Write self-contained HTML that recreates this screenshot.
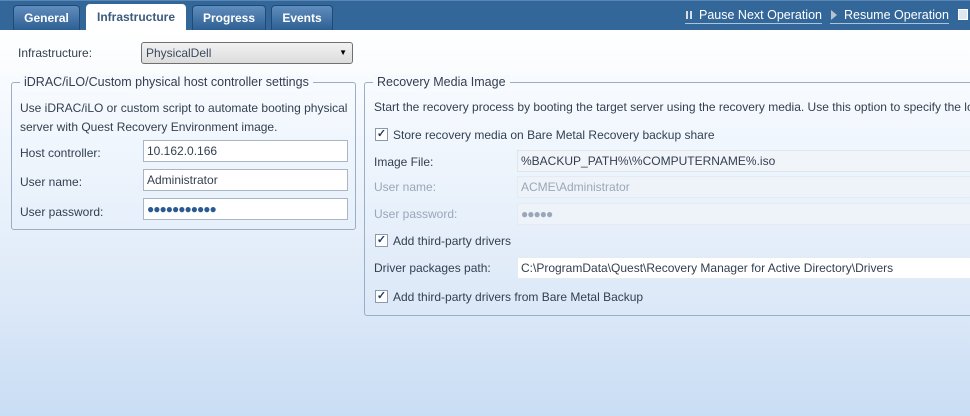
<!DOCTYPE html>
<html><head><style>
*{box-sizing:border-box;margin:0;padding:0}
body{width:970px;height:416px;overflow:hidden;font-family:"Liberation Sans",sans-serif;font-size:12px;color:#333f4f;position:relative;background:linear-gradient(#ffffff 30px,#f3f8fe 120px,#dde9f8 300px,#c9ddf4 416px)}
.hdr{position:absolute;left:0;top:0;width:970px;height:30px;background:#336699;border-top:1px solid #5a86b5}
.tab{position:absolute;top:5px;height:25px;background:linear-gradient(#5f8dbd,#2e5f93);border:1px solid #1f4a78;border-bottom:none;border-radius:4px 4px 0 0;color:#fff;font-weight:bold;text-align:center;line-height:24px;font-size:12px}
.tab.act{background:#fff;color:#3b5a80;top:4px;height:27px;border-color:#fff}
.a{position:absolute;white-space:nowrap}
.lnk{color:#fff;font-size:12.5px;border-bottom:1px solid #aac3de;line-height:15px}
.box{position:absolute;border:1px solid #9aaec6;border-radius:3px}
.leg{position:absolute;top:-8px;padding:0 4px;background:#f6f9fe;color:#333f4f;font-size:12.5px}
.in{position:absolute;height:22px;border:1px solid #a9b6c6;background:#fff;padding-left:3px;line-height:20px;color:#333f4f;font-size:12px}
.cb{position:absolute;width:13px;height:13px;border:1px solid #8a99ab;background:#fff;font-size:11px;line-height:11px;text-align:center;color:#223a66;font-weight:bold}
.g{color:#9aa7b8}
.ic{display:inline-block;vertical-align:-1px;margin-right:6px}
</style></head><body>
<div class="hdr"></div>
<div class="tab" style="left:13px;width:67px">General</div>
<div class="tab act" style="left:86px;width:100px">Infrastructure</div>
<div class="tab" style="left:192px;width:74px">Progress</div>
<div class="tab" style="left:271px;width:62px">Events</div>
<div class="a lnk" style="left:685px;top:8px"><svg class="ic" width="8" height="10"><rect x="1" y="1" width="2" height="8" fill="#d8dde4"/><rect x="5" y="1" width="2" height="8" fill="#d8dde4"/></svg>Pause Next Operation</div>
<div class="a lnk" style="left:830px;top:8px"><svg class="ic" width="8" height="10"><path d="M1 0L7 5L1 10Z" fill="#b8c2ce"/></svg>Resume Operation</div>
<div class="a" style="left:958px;top:9px;width:10px;height:11px;background:#dfe7f0;border:1px solid #fff"></div>

<div class="a" style="left:18px;top:46px">Infrastructure:</div>
<div class="a" style="left:141px;top:42px;width:212px;height:22px;border:1px solid #707070;border-radius:3px;background:linear-gradient(#f2f2f2,#dcdcdc);padding-left:4px;line-height:20px;color:#3a4a60">PhysicalDell<span style="position:absolute;right:5px;font-size:8px;color:#000">▼</span></div>

<div class="box" style="left:11px;top:82px;width:345px;height:148px">
<div class="leg" style="left:8px">iDRAC/iLO/Custom physical host controller settings</div>
</div>
<div class="a" style="left:20px;top:99px;line-height:19px">Use iDRAC/iLO or custom script to automate booting physical<br>server with Quest Recovery Environment image.</div>
<div class="a" style="left:20px;top:146px">Host controller:</div>
<div class="in" style="left:143px;top:140px;width:205px">10.162.0.166</div>
<div class="a" style="left:20px;top:175px">User name:</div>
<div class="in" style="left:143px;top:169px;width:205px">Administrator</div>
<div class="a" style="left:20px;top:205px">User password:</div>
<div class="in" style="left:143px;top:198px;width:205px;color:#2b5a92;letter-spacing:-1px">●●●●●●●●●●●</div>

<div class="box" style="left:364px;top:82px;width:620px;height:234px">
<div class="leg" style="left:8px">Recovery Media Image</div>
</div>
<div class="a" style="left:374px;top:100px">Start the recovery process by booting the target server using the recovery media. Use this option to specify the lo</div>
<div class="cb" style="left:375px;top:128px">✓</div>
<div class="a" style="left:393px;top:128px">Store recovery media on Bare Metal Recovery backup share</div>
<div class="a" style="left:374px;top:155px">Image File:</div>
<div class="in" style="left:517px;top:150px;width:460px;background:#f1f5fa;border-color:#dde5ee">%BACKUP_PATH%\%COMPUTERNAME%.iso</div>
<div class="a g" style="left:374px;top:180px">User name:</div>
<div class="in g" style="left:517px;top:176px;width:460px;background:#eef3f9;border-color:#e4ebf3">ACME\Administrator</div>
<div class="a g" style="left:374px;top:207px">User password:</div>
<div class="in g" style="left:517px;top:203px;width:460px;background:#eef3f9;border-color:#e4ebf3;letter-spacing:-1px">●●●●●</div>
<div class="cb" style="left:375px;top:234px">✓</div>
<div class="a" style="left:393px;top:234px">Add third-party drivers</div>
<div class="a" style="left:374px;top:261px">Driver packages path:</div>
<div class="in" style="left:517px;top:257px;width:460px;border-color:#e4ebf3">C:\ProgramData\Quest\Recovery Manager for Active Directory\Drivers</div>
<div class="cb" style="left:375px;top:290px">✓</div>
<div class="a" style="left:393px;top:290px">Add third-party drivers from Bare Metal Backup</div>
</body></html>
